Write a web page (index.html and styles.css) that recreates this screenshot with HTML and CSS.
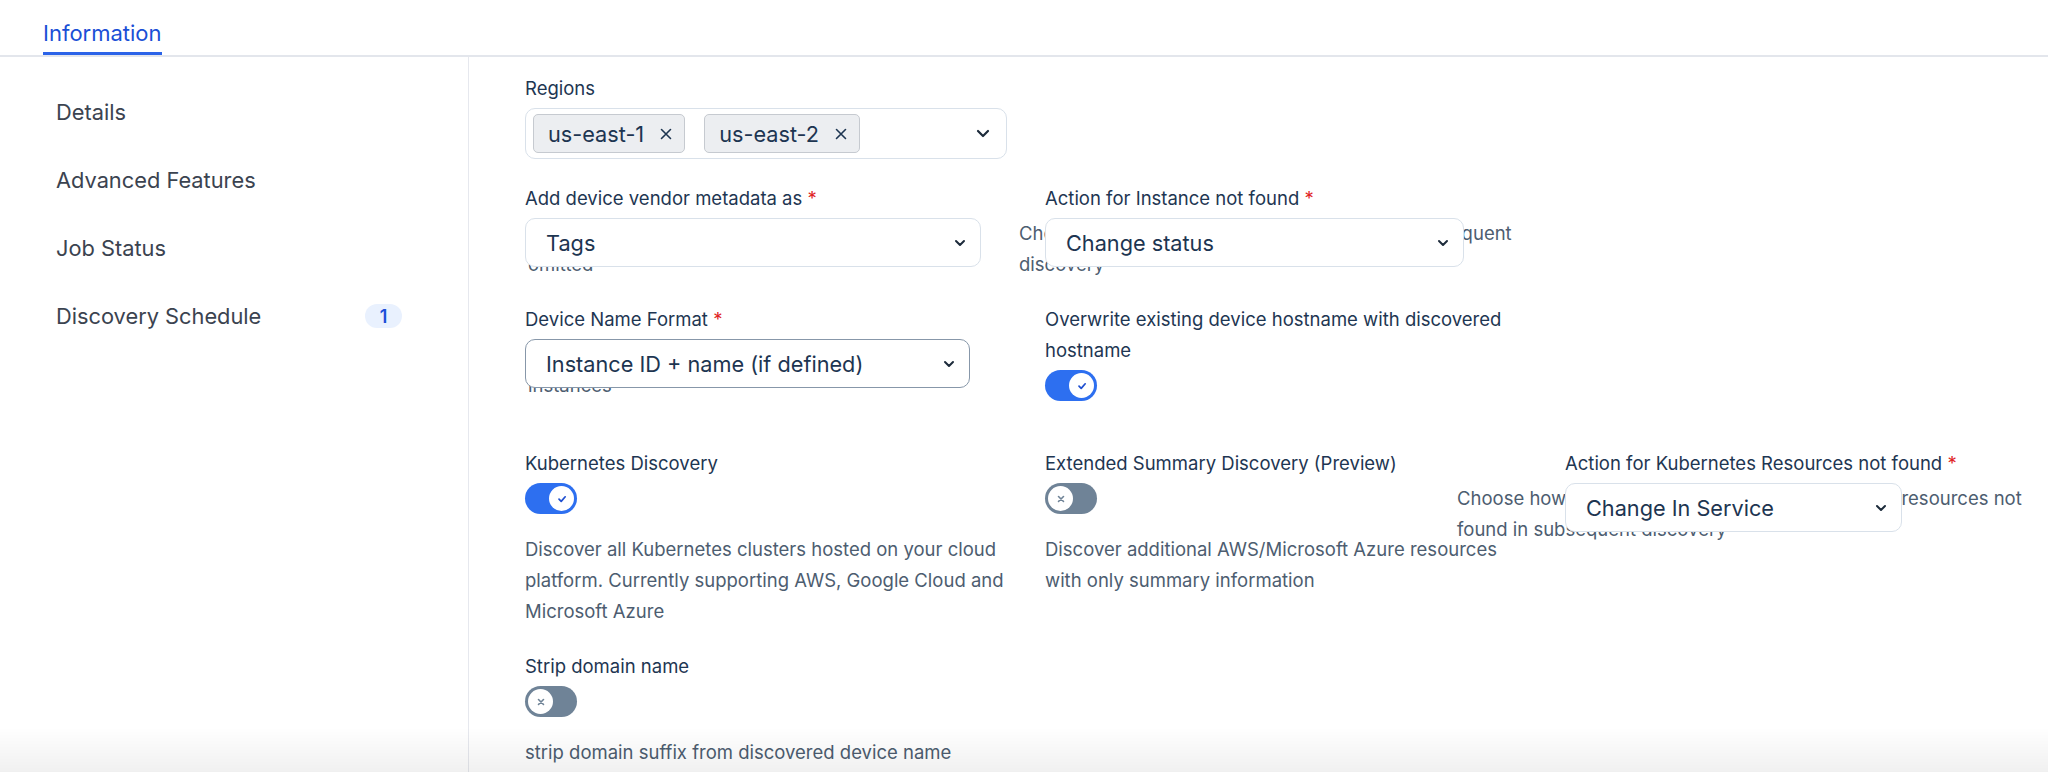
FILE: index.html
```html
<!DOCTYPE html>
<html lang="en">
<head>
<meta charset="utf-8">
<title>Information</title>
<link rel="stylesheet" href="styles.css">
</head>
<body>
<div class="tabs">
  <div class="tab active">Information</div>
</div>
<div class="layout">
  <nav class="sidebar">
    <div class="nav-item">Details</div>
    <div class="nav-item">Advanced Features</div>
    <div class="nav-item">Job Status</div>
    <div class="nav-item">Discovery Schedule <span class="badge">1</span></div>
  </nav>
  <main class="content">
    <div class="form-grid">
      <!-- Row 1 -->
      <div class="field c1">
        <div class="label">Regions</div>
        <div class="select select-multi w-regions">
          <span class="chip">us-east-1
            <svg class="chip-x" width="12" height="12" viewBox="0 0 12 12"><path d="M1.5 1.5L10.5 10.5M10.5 1.5L1.5 10.5" stroke="#1d3551" stroke-width="1.6" fill="none" stroke-linecap="round"/></svg>
          </span>
          <span class="chip">us-east-2
            <svg class="chip-x" width="12" height="12" viewBox="0 0 12 12"><path d="M1.5 1.5L10.5 10.5M10.5 1.5L1.5 10.5" stroke="#1d3551" stroke-width="1.6" fill="none" stroke-linecap="round"/></svg>
          </span>
          <svg class="chev" width="14" height="9" viewBox="0 0 14 9"><path d="M2 2L7 7L12 2" stroke="#1d2b3b" stroke-width="2.2" fill="none" stroke-linecap="round" stroke-linejoin="round"/></svg>
        </div>
      </div>

      <!-- Row 2 -->
      <div class="field c1">
        <div class="label">Add device vendor metadata as <span class="req">*</span></div>
        <div class="select w-tags"><span class="value">Tags</span>
          <svg class="chev" width="12" height="8" viewBox="0 0 12 8"><path d="M2 2L6 6L10 2" stroke="#1d2b3b" stroke-width="2" fill="none" stroke-linecap="round" stroke-linejoin="round"/></svg>
        </div>
        <div class="helper under h-c1">Choose how vendor metadata is added, or<br>omitted</div>
      </div>
      <div class="field c2">
        <div class="label">Action for Instance not found <span class="req">*</span></div>
        <div class="select w-status"><span class="value">Change status</span>
          <svg class="chev" width="12" height="8" viewBox="0 0 12 8"><path d="M2 2L6 6L10 2" stroke="#1d2b3b" stroke-width="2" fill="none" stroke-linecap="round" stroke-linejoin="round"/></svg>
        </div>
        <div class="helper under h-c2">Choose how to handle Instance not found in subsequent<br>discovery</div>
      </div>

      <!-- Row 3 -->
      <div class="field c1">
        <div class="label">Device Name Format <span class="req">*</span></div>
        <div class="select select-hover w-name"><span class="value">Instance ID + name (if defined)</span>
          <svg class="chev" width="12" height="8" viewBox="0 0 12 8"><path d="M2 2L6 6L10 2" stroke="#1d2b3b" stroke-width="2" fill="none" stroke-linecap="round" stroke-linejoin="round"/></svg>
        </div>
        <div class="helper under h-c1">Choose the naming format for discovered<br>instances</div>
      </div>
      <div class="field c2">
        <div class="label">Overwrite existing device hostname with discovered<br>hostname</div>
        <div class="toggle on"><span class="knob">
          <svg width="12" height="12" viewBox="0 0 12 12"><path d="M3 6.2L5.2 8.4L9.2 3.8" stroke="#1f4fd0" stroke-width="1.7" fill="none" stroke-linecap="round" stroke-linejoin="round"/></svg>
        </span></div>
        <div class="helper empty"></div>
      </div>

      <!-- Row 4 -->
      <div class="field c1">
        <div class="label">Kubernetes Discovery</div>
        <div class="toggle on"><span class="knob">
          <svg width="12" height="12" viewBox="0 0 12 12"><path d="M3 6.2L5.2 8.4L9.2 3.8" stroke="#1f4fd0" stroke-width="1.7" fill="none" stroke-linecap="round" stroke-linejoin="round"/></svg>
        </span></div>
        <div class="helper">Discover all Kubernetes clusters hosted on your cloud<br>platform. Currently supporting AWS, Google Cloud and<br>Microsoft Azure</div>
      </div>
      <div class="field c2">
        <div class="label">Extended Summary Discovery (Preview)</div>
        <div class="toggle off"><span class="knob">
          <svg width="12" height="12" viewBox="0 0 12 12"><path d="M3.5 3.5L8.5 8.5M8.5 3.5L3.5 8.5" stroke="#6f8397" stroke-width="1.6" fill="none" stroke-linecap="round"/></svg>
        </span></div>
        <div class="helper">Discover additional AWS/Microsoft Azure resources<br>with only summary information</div>
      </div>
      <div class="field c3">
        <div class="label">Action for Kubernetes Resources not found <span class="req">*</span></div>
        <div class="select w-k8s"><span class="value">Change In Service</span>
          <svg class="chev" width="12" height="8" viewBox="0 0 12 8"><path d="M2 2L6 6L10 2" stroke="#1d2b3b" stroke-width="2" fill="none" stroke-linecap="round" stroke-linejoin="round"/></svg>
        </div>
        <div class="helper under h-c3">Choose how to handle any discovered Kubernetes resources not<br>found in subsequent discovery</div>
      </div>

      <!-- Row 5 -->
      <div class="field c1">
        <div class="label">Strip domain name</div>
        <div class="toggle off"><span class="knob">
          <svg width="12" height="12" viewBox="0 0 12 12"><path d="M3.5 3.5L8.5 8.5M8.5 3.5L3.5 8.5" stroke="#6f8397" stroke-width="1.6" fill="none" stroke-linecap="round"/></svg>
        </span></div>
        <div class="helper">strip domain suffix from discovered device name</div>
      </div>
    </div>
  </main>
</div>
<div class="bottom-shade"></div>
</body>
</html>
```

FILE: styles.css
```css
* { box-sizing: border-box; }

html, body {
  margin: 0;
  padding: 0;
  background: #ffffff;
  font-family: Inter, "Noto Sans", "Liberation Sans", sans-serif;
  overflow: hidden;
}

body { height: 772px; }

.tabs {
  display: flex;
  padding-left: 43px;
  border-bottom: 2px solid #e3e6ec;
  height: 57px;
}

.tab {
  font-size: 22px;
  line-height: 26px;
  padding-top: 20px;
  padding-bottom: 6px;
  color: #3b4350;
}

.tab.active {
  color: #1a4fd6;
  border-bottom: 3px solid #2b63e8;
}

.layout {
  display: flex;
  height: 715px;
}

.sidebar {
  width: 469px;
  flex: none;
  border-right: 1px solid #e6e8ee;
  padding-top: 21px;
}

.nav-item {
  height: 68px;
  display: flex;
  align-items: center;
  justify-content: space-between;
  padding: 0 66px 0 56px;
  font-size: 21.8px;
  color: #3b4350;
}

.badge {
  width: 37px;
  height: 24px;
  border-radius: 12px;
  background: #e9f1fe;
  color: #1d4ed8;
  font-size: 18px;
  font-weight: 600;
  display: flex;
  align-items: center;
  justify-content: center;
}

.content {
  flex: 1;
  padding: 16px 0 0 56px;
}

.form-grid {
  display: grid;
  grid-template-columns: repeat(3, 520px);
  row-gap: 24px;
  align-items: start;
}

.c1 { grid-column: 1; }
.c2 { grid-column: 2; }
.c3 { grid-column: 3; }

.field {
  display: flex;
  flex-direction: column;
  align-items: flex-start;
}

.label {
  font-size: 18.5px;
  line-height: 31px;
  color: #1e3652;
  margin-bottom: 4px;
  white-space: nowrap;
}

.req { color: #e02424; }

.select {
  position: relative;
  z-index: 1;
  height: 49px;
  background: #ffffff;
  border: 1.5px solid #d9e1ea;
  border-radius: 10px;
  display: flex;
  align-items: center;
  padding: 0 14px 0 20px;
  font-size: 21.7px;
  color: #1d3551;
}

.select .value { flex: 1; white-space: nowrap; }

.select .chev { margin-left: auto; flex: none; }

.select-hover { border-color: #8797a9; }

.select-multi {
  height: 51px;
  padding: 0 16px 0 7px;
  gap: 19px;
}

.w-regions { width: 482px; }
.w-tags { width: 456px; }
.w-status { width: 419px; }
.w-name { width: 445px; }
.w-k8s { width: 337px; }

.chip {
  height: 39px;
  display: flex;
  align-items: center;
  gap: 16px;
  padding: 0 12px 0 14px;
  background: #eceef1;
  border: 1.5px solid #c6cad0;
  border-radius: 5px;
  font-size: 21.7px;
  color: #1d3551;
  white-space: nowrap;
}

.helper {
  font-size: 18.5px;
  line-height: 31px;
  color: #4d5d70;
  margin-top: 20px;
  white-space: nowrap;
}

.helper.empty { margin-top: 23px; }
.helper.under { margin-top: -49px; }
.h-c1 { margin-left: 3px; }
.h-c2 { margin-left: -26px; }
.h-c3 { margin-left: -108px; }

.toggle {
  width: 52px;
  height: 31px;
  border-radius: 16px;
  position: relative;
  flex: none;
}

.toggle.on { background: #2d6ff0; }
.toggle.off { background: #6f8397; }

.knob {
  position: absolute;
  top: 3px;
  width: 25px;
  height: 25px;
  border-radius: 50%;
  background: #ffffff;
  display: flex;
  align-items: center;
  justify-content: center;
}

.toggle.on .knob { right: 3px; }
.toggle.off .knob { left: 3px; }

.bottom-shade {
  position: fixed;
  left: 0;
  right: 0;
  bottom: 0;
  height: 44px;
  background: linear-gradient(to bottom, rgba(0, 0, 0, 0), rgba(0, 0, 0, 0.06));
  pointer-events: none;
  z-index: 5;
}
```
